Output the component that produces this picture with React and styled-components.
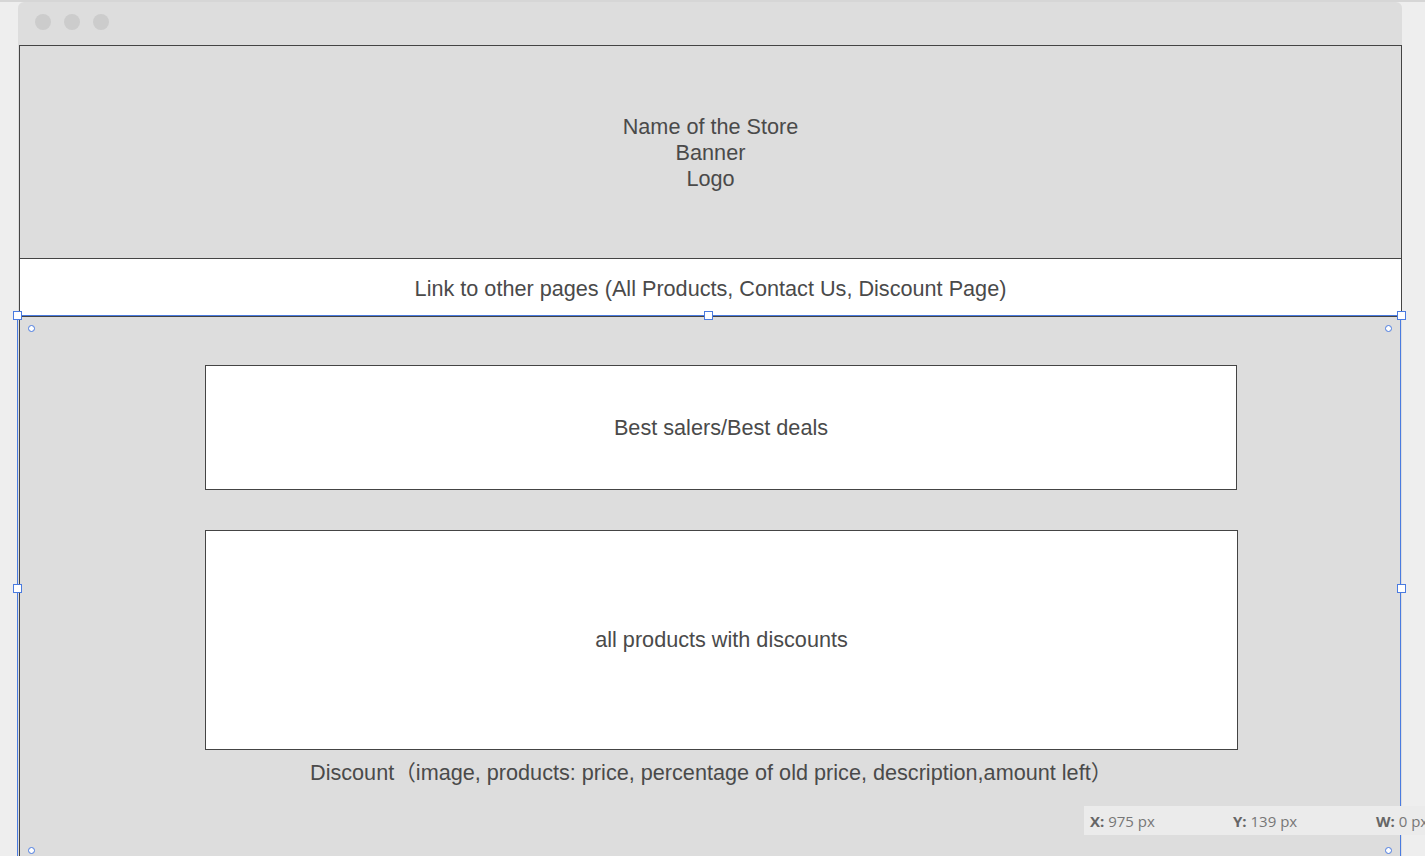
import React from "react";
import styled, { createGlobalStyle } from "styled-components";

const GlobalStyle = createGlobalStyle`
  html, body {
    margin: 0;
    padding: 0;
    background: #eeeeee;
    overflow: hidden;
    font-family: "Liberation Sans", Arial, sans-serif;
  }
`;

const Page = styled.div`
  height: 856px;
  border-top: 2px solid #d6d6d6;
  box-sizing: border-box;
  position: relative;
`;

const Window = styled.div`
  margin-left: 18px;
  width: 1384px;
  height: 854px;
  background: #dddddd;
  border-radius: 6px 6px 0 0;
  display: flex;
  flex-direction: column;
`;

const TitleBar = styled.div`
  height: 43px;
  flex-shrink: 0;
  display: flex;
  align-items: center;
  gap: 13px;
  padding: 0 0 4px 17px;
  box-sizing: border-box;
`;

const Dot = styled.span`
  width: 16px;
  height: 16px;
  border-radius: 50%;
  background: #cccccc;
`;

const Canvas = styled.div`
  flex: 1;
  padding: 0 0 0 1px;
  display: flex;
  flex-direction: column;
  width: 1383px;
  color: #4a4a4a;
  font-size: 21.65px;
`;

const Header = styled.div`
  height: 214px;
  border: 1px solid #444;
  box-sizing: border-box;
  display: flex;
  flex-direction: column;
  align-items: center;
  justify-content: center;
  padding-top: 2px;
  line-height: 26px;
`;

const Nav = styled.div`
  height: 58px;
  background: #fff;
  border: 1px solid #444;
  border-top: none;
  box-sizing: border-box;
  display: flex;
  align-items: center;
  justify-content: center;
  padding-top: 3px;
`;

const Main = styled.div`
  flex: 1;
  border-left: 1px solid #444;
  padding: 48px 0 0 185px;
  display: flex;
  flex-direction: column;
`;

const Panel = styled.div`
  width: ${(p) => p.$w}px;
  height: ${(p) => p.$h}px;
  margin-bottom: ${(p) => p.$mb || 0}px;
  background: #fff;
  border: 1px solid #444;
  box-sizing: border-box;
  display: flex;
  align-items: center;
  justify-content: center;
`;

const Caption = styled.div`
  margin: 10px 0 0 105px;
  line-height: 26px;
  font-family: "Liberation Sans", "Noto Sans CJK SC", sans-serif;
  white-space: nowrap;
`;

const Selection = styled.div`
  position: absolute;
  left: 17px;
  top: 313px;
  width: 1384px;
  bottom: -2px;
  border-top: 1px solid #4a7be0;
  border-left: 1px solid #4a7be0;
  border-right: 1px solid #4a7be0;
  box-sizing: border-box;
  pointer-events: none;
`;

const Handle = styled.span`
  position: absolute;
  width: 7px;
  height: 7px;
  background: #fff;
  border: 1px solid #4a7be0;
  left: ${(p) => p.$x}px;
  top: ${(p) => p.$y}px;
`;

const Ring = styled.span`
  position: absolute;
  width: 5px;
  height: 5px;
  border-radius: 50%;
  background: #fff;
  border: 1px solid #4a7be0;
  left: ${(p) => p.$x}px;
  top: ${(p) => p.$y}px;
`;

const Coords = styled.div`
  position: absolute;
  left: 1084px;
  top: 804px;
  width: 341px;
  height: 29px;
  background: #ebebeb;
  display: flex;
  align-items: center;
  padding-left: 6px;
  box-sizing: border-box;
  font-family: "Open Sans", sans-serif;
  font-size: 15px;
  color: #777;
  white-space: nowrap;
  overflow: hidden;
`;

const CoordItem = styled.span`
  width: 143px;
  flex-shrink: 0;
  b {
    color: #666;
    font-weight: 700;
  }
`;

export default function App() {
  return (
    <Page>
      <GlobalStyle />
      <Window>
        <TitleBar>
          <Dot />
          <Dot />
          <Dot />
        </TitleBar>
        <Canvas>
          <Header>
            <div>Name of the Store</div>
            <div>Banner</div>
            <div>Logo</div>
          </Header>
          <Nav>Link to other pages (All Products, Contact Us, Discount Page)</Nav>
          <Main>
            <Panel $w={1032} $h={125} $mb={40}>
              Best salers/Best deals
            </Panel>
            <Panel $w={1033} $h={220}>
              all products with discounts
            </Panel>
            <Caption>
              Discount（image, products: price, percentage of old price,
              description,amount left）
            </Caption>
          </Main>
        </Canvas>
      </Window>
      <Selection />
      <Handle $x={13} $y={309} />
      <Handle $x={704} $y={309} />
      <Handle $x={1397} $y={309} />
      <Handle $x={13} $y={582} />
      <Handle $x={1397} $y={582} />
      <Ring $x={28} $y={323} />
      <Ring $x={1385} $y={323} />
      <Ring $x={28} $y={845} />
      <Ring $x={1385} $y={845} />
      <Coords>
        <CoordItem>
          <b>X:</b> 975 px
        </CoordItem>
        <CoordItem>
          <b>Y:</b> 139 px
        </CoordItem>
        <CoordItem>
          <b>W:</b> 0 px
        </CoordItem>
      </Coords>
    </Page>
  );
}
